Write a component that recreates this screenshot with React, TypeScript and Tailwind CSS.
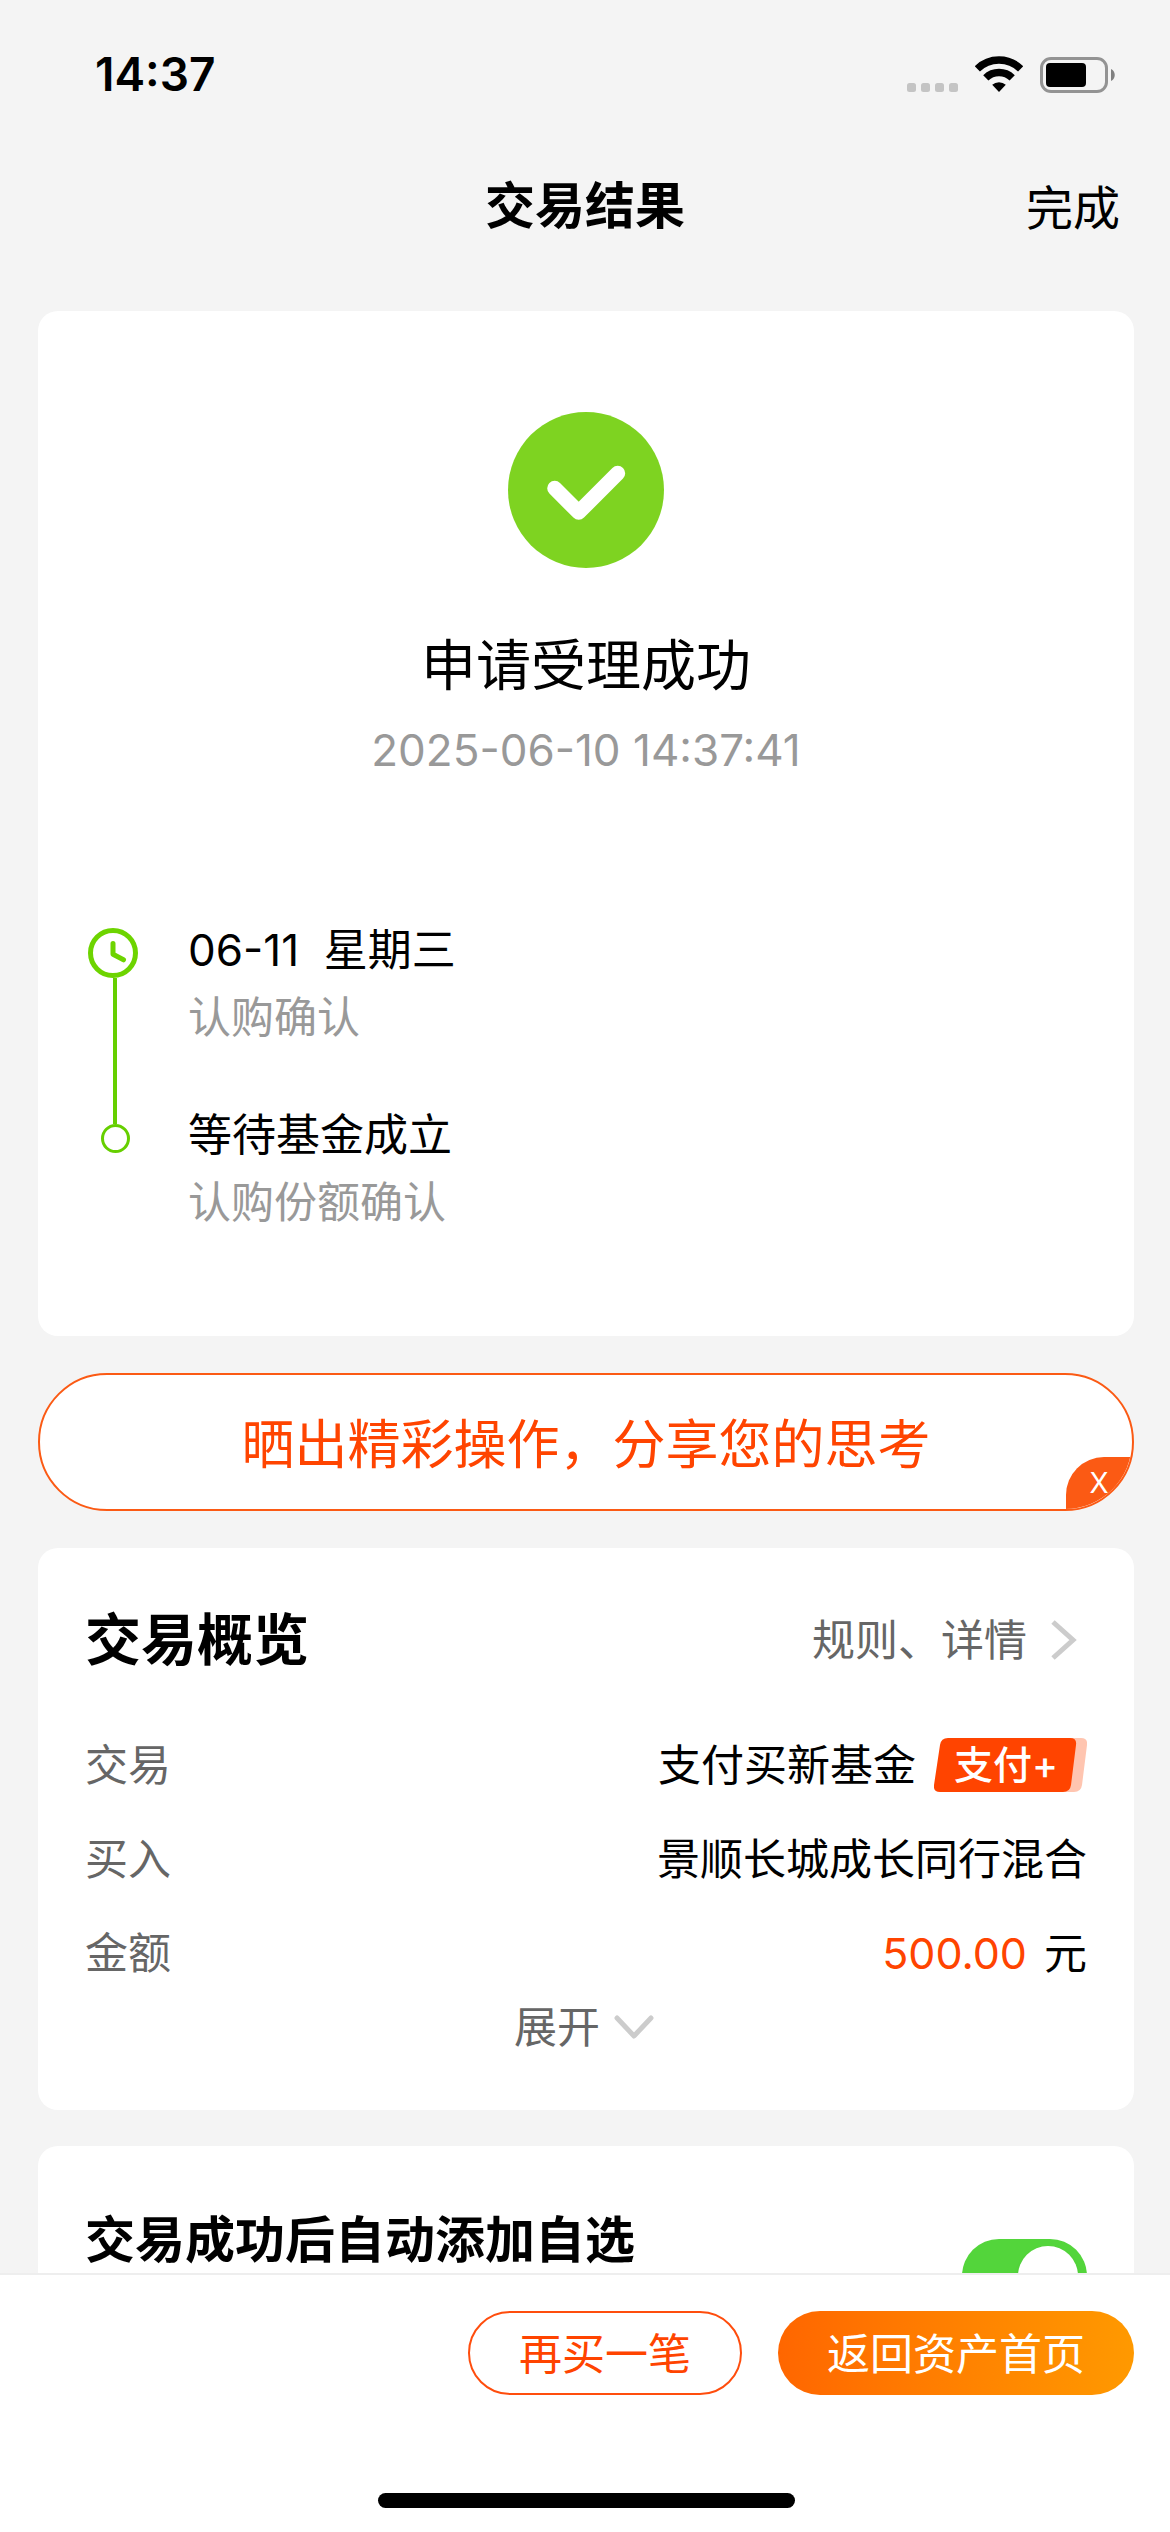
import { useState } from 'react'

interface Step {
  title: string
  note: string
}

const steps: Step[] = [
  { title: '06-11\u00a0 星期三', note: '认购确认' },
  { title: '等待基金成立', note: '认购份额确认' },
]

function StatusBar() {
  return (
    <div className="flex h-[148px] items-center justify-between pr-[54px] pl-[95px]">
      <span className="text-[46px] leading-[60px] font-semibold">14:37</span>
      <div className="flex items-end gap-[17px]">
        <svg className="mb-px h-[9px] w-[51px] fill-[#c4c4c4]" viewBox="0 0 51 9">
          <rect x="0" width="9" height="9" rx="2.5" />
          <rect x="14" width="9" height="9" rx="2.5" />
          <rect x="28" width="9" height="9" rx="2.5" />
          <rect x="42" width="9" height="9" rx="2.5" />
        </svg>
        <svg className="mb-px h-[36px] w-[48px]" viewBox="0 0 48 36" fill="none" stroke="#000">
          <path d="M2.3 12.9a31 31 0 0 1 43.4 0" strokeWidth="7.5" />
          <path d="M10.8 21.9a19 19 0 0 1 26.4 0" strokeWidth="7.5" />
          <path d="M17.2 28.8a10 10 0 0 1 13.6 0L24 36z" fill="#000" stroke="none" />
        </svg>
        <svg className="h-[36px] w-[76px]" viewBox="0 0 76 36">
          <rect x="1.5" y="1.5" width="65" height="33" rx="9.5" fill="none" stroke="#939393" strokeWidth="3" />
          <rect x="6" y="6" width="40" height="24" rx="4" />
          <path d="M71 12c5 2 5 10 0 12z" fill="#808080" />
        </svg>
      </div>
    </div>
  )
}

function NavBar() {
  return (
    <div className="grid h-[116px] grid-cols-[1fr_auto_1fr] items-center pr-[50px] pl-[50px]">
      <h1 className="col-start-2 text-[50px] leading-[60px] font-bold">交易结果</h1>
      <button type="button" className="justify-self-end pt-1 text-[47px] leading-[60px]">
        完成
      </button>
    </div>
  )
}

function ResultCard() {
  return (
    <section className="rounded-[20px] bg-white pt-[101px] pb-[104px]">
      <svg className="mx-auto size-[156px]" viewBox="0 0 156 156" fill="none">
        <circle cx="78" cy="78" r="78" fill="#7ed321" />
        <path
          d="M46.7 76.3l24 24 39-39"
          stroke="#fff"
          strokeWidth="15"
          strokeLinecap="round"
          strokeLinejoin="round"
        />
      </svg>
      <h2 className="mt-[57px] text-center text-[55px] leading-[80px]">申请受理成功</h2>
      <p className="mt-[15px] text-center text-[44px] leading-[60px] text-[#999]">
        2025-06-10 14:37:41
      </p>

      <div className="mt-[140px] flex gap-[46px] px-[50px]">
        <div className="flex w-[54px] flex-col items-center pt-2 pb-[79px]">
          <svg
            className="size-[50px] self-start"
            viewBox="0 0 50 50"
            fill="none"
            stroke="#6dd400"
            strokeLinecap="round"
            strokeLinejoin="round"
          >
            <circle cx="25" cy="25" r="22.5" strokeWidth="5" />
            <path d="M25 15.5v10.8l10.5 5.5" strokeWidth="5" />
          </svg>
          <div className="w-1 flex-1 bg-[#66cf00]" />
          <div className="size-[29px] rounded-full border-3 border-[#66cf00]" />
        </div>
        <ol className="flex flex-col gap-[58px] leading-[60px]">
          {steps.map((step) => (
            <li key={step.title}>
              <p className="text-[44px]">{step.title}</p>
              <p className="mt-[7px] text-[43px] text-[#999]">{step.note}</p>
            </li>
          ))}
        </ol>
      </div>
    </section>
  )
}

function ShareBanner() {
  return (
    <div className="relative mt-[37px] flex h-[138px] overflow-hidden rounded-full border-2 border-[#fb5a14] bg-white">
      <button type="button" className="flex-1 pt-1.5 text-[53px] leading-[80px] text-[#ff4400]">
        晒出精彩操作，分享您的思考
      </button>
      <button
        type="button"
        className="absolute right-0 bottom-0 h-[52px] w-[66px] rounded-tl-[38px] bg-[#fb5a14] text-[28px] leading-[52px] text-white"
      >
        X
      </button>
    </div>
  )
}

function PayBadge() {
  return (
    <span className="relative h-[54px] w-[153px] pl-[20px] text-[39px] leading-[54px] font-medium text-white">
      <svg className="absolute inset-0 size-full" viewBox="0 0 153 54">
        <path d="M120 0h27q7 0 6 7l-5 40q-1 7-8 7h-20z" fill="#ffc5b0" />
        <path d="M14 0h122q7 0 6 7l-5 40q-1 7-8 7H6q-7 0-6-7l6-40q1-7 8-7z" fill="#ff4400" />
      </svg>
      <span className="relative">支付+</span>
    </span>
  )
}

function OverviewCard() {
  return (
    <section className="mt-[37px] rounded-[20px] bg-white px-[47px] pt-[52px] pb-[53px] text-[43px] leading-[60px]">
      <div className="flex items-center justify-between">
        <h2 className="text-[56px] leading-[80px] font-bold">交易概览</h2>
        <a href="#rules" className="flex items-center gap-6 pr-[10px] text-[#666]">
          规则、详情
          <svg className="h-[40px] w-[26px]" viewBox="0 0 26 40" fill="none" stroke="#ccc" strokeWidth="5">
            <path d="M2 2l20 18L2 38" />
          </svg>
        </a>
      </div>

      <dl className="mt-[55px] flex flex-col gap-[34px]">
        <div className="flex items-center justify-between">
          <dt className="text-[#666]">交易</dt>
          <dd className="flex items-center gap-[18px]">
            支付买新基金
            <PayBadge />
          </dd>
        </div>
        <div className="flex items-center justify-between">
          <dt className="text-[#666]">买入</dt>
          <dd>景顺长城成长同行混合</dd>
        </div>
        <div className="flex items-center justify-between">
          <dt className="text-[#666]">金额</dt>
          <dd>
            <span className="mr-[17px] text-[#ff4400]">500.00</span>元
          </dd>
        </div>
      </dl>

      <button type="button" className="mx-auto mt-[14px] flex items-center gap-3.5 pr-1 text-[#666]">
        展开
        <svg
          className="h-[24px] w-[40px]"
          viewBox="0 0 40 24"
          fill="none"
          stroke="#ccc"
          strokeWidth="5"
          strokeLinecap="round"
          strokeLinejoin="round"
        >
          <path d="M3 3l17 18L37 3" />
        </svg>
      </button>
    </section>
  )
}

function WatchlistCard() {
  const [enabled, setEnabled] = useState(true)

  return (
    <section className="mt-9 flex items-start justify-between rounded-[20px] bg-white px-[47px] pt-[64px] pb-[64px]">
      <label htmlFor="auto-watch" className="text-[50px] leading-[60px] font-bold">
        交易成功后自动添加自选
      </label>
      <input
        id="auto-watch"
        type="checkbox"
        role="switch"
        checked={enabled}
        onChange={(e) => setEnabled(e.target.checked)}
        className="mt-[29px] h-[74px] w-[125px] appearance-none rounded-full bg-gray-200 p-[7px] before:block before:size-[60px] before:rounded-full before:bg-white before:shadow-md checked:bg-[#53d53b] checked:pl-[56px]"
      />
    </section>
  )
}

export default function App() {
  return (
    <div className="flex h-screen flex-col bg-[#f4f4f4] font-[Inter,'Noto_Sans_CJK_SC',sans-serif] text-black">
      <header>
        <StatusBar />
        <NavBar />
      </header>

      <main className="flex-1 overflow-y-auto pt-[47px] pr-[36px] pl-[38px] [scrollbar-width:none]">
        <ResultCard />
        <ShareBanner />
        <OverviewCard />
        <WatchlistCard />
      </main>

      <footer className="border-t-2 border-[#eee] bg-white pt-9 pr-[36px] pb-6 pl-[38px]">
        <div className="flex justify-end gap-9 text-[43px]">
          <button
            type="button"
            className="h-[84px] rounded-full border-2 border-[#ff4d0d] px-[49px] pt-0.5 text-[#ff4400]"
          >
            再买一笔
          </button>
          <button
            type="button"
            className="h-[84px] rounded-full bg-linear-to-r from-[#ff6600] to-[#ff9900] px-[49px] pt-0.5 text-white"
          >
            返回资产首页
          </button>
        </div>
        <div className="mx-auto mt-[98px] h-[15px] w-[417px] rounded-full bg-black" />
      </footer>
    </div>
  )
}
